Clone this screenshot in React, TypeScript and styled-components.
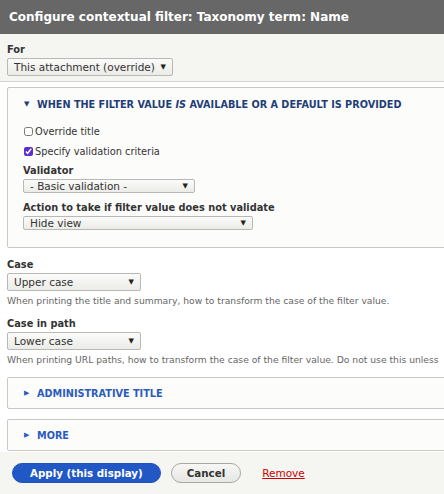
import styled, { createGlobalStyle } from 'styled-components'

const GlobalStyle = createGlobalStyle`
  html, body {
    margin: 0;
    padding: 0;
    background: #fff;
    overflow: hidden;
  }
  * {
    box-sizing: border-box;
  }
`

const Dialog = styled.div`
  width: 444px;
  height: 494px;
  display: flex;
  flex-direction: column;
  font-family: 'DejaVu Sans', 'Liberation Sans', sans-serif;
  color: #333;
  overflow: hidden;
`

const TitleBar = styled.div`
  height: 34px;
  flex: none;
  background: #676767;
  color: #fff;
  font-weight: bold;
  font-size: 12px;
  padding: 10px 9px 0;
  white-space: nowrap;
`

const Content = styled.div`
  flex: 1;
  overflow: hidden;
`

const OverrideBar = styled.div`
  background: #f5f5f2;
  border-bottom: 1px solid #d4d4d0;
  padding: 10px 7px 6px;
  height: 48px;
`

const Label = styled.div`
  font-weight: bold;
  font-size: 9.8px;
  line-height: 12px;
  color: #333;
  white-space: nowrap;
  margin-bottom: 2px;
`

const Select = styled.div<{ $width: number; $height?: number }>`
  width: ${(p) => p.$width}px;
  height: ${(p) => p.$height ?? 18}px;
  display: flex;
  align-items: center;
  justify-content: space-between;
  padding: 0 6px;
  border: 1px solid #b8b8b4;
  border-radius: 2px;
  background: linear-gradient(#fbfbf9, #ebebe8);
  font-size: 10.5px;
  color: #333;
  white-space: nowrap;
`

const Arrow = styled.span`
  font-size: 7px;
  color: #222;
`

const Form = styled.div`
  padding: 5px 0 0 7px;
  width: 620px;
`

const Fieldset = styled.div<{ $open?: boolean }>`
  border: 1px solid #c8c8c4;
  border-radius: 2px;
  background: #fcfcfa;
  padding: ${(p) => (p.$open ? '9px 15px 17px' : '8px 15px 0')};
  height: ${(p) => (p.$open ? 'auto' : '32px')};
  margin-bottom: ${(p) => (p.$open ? '11px' : '10px')};
`

const Legend = styled.div<{ $open?: boolean }>`
  display: flex;
  align-items: center;
  gap: 5px;
  font-weight: bold;
  font-size: 9.7px;
  text-transform: uppercase;
  color: ${(p) => (p.$open ? '#1f3e78' : '#2a5bbf')};
  white-space: nowrap;
  height: 14px;
  em {
    font-style: italic;
  }
`

const Caret = styled.span`
  font-size: 7px;
  width: 8px;
  margin-left: 1px;
`

const FieldsetBody = styled.div`
  padding-top: 10px;
  display: flex;
  flex-direction: column;
`

const CheckRow = styled.label`
  display: flex;
  align-items: center;
  gap: 2px;
  font-size: 9.8px;
  color: #333;
  height: 20px;
`

const Check = styled.input`
  width: 9px;
  height: 9px;
  margin: 0 0 0 1px;
  accent-color: #5b2ed1;
`

const Item = styled.div<{ $gap: number }>`
  margin-top: ${(p) => p.$gap}px;
`

const Field = styled.div`
  margin-bottom: 12px;
`

const Description = styled.div`
  font-size: 9.2px;
  color: #666;
  white-space: nowrap;
  margin-top: 4px;
`

const Footer = styled.div`
  flex: none;
  height: 42px;
  background: #f5f5f2;
  display: flex;
  align-items: center;
  gap: 10px;
  padding: 0 12px;
`

const Button = styled.button<{ $primary?: boolean }>`
  height: 20px;
  border-radius: 10px;
  font-family: inherit;
  font-weight: bold;
  font-size: 10.3px;
  padding: 0 ${(p) => (p.$primary ? '17px' : '15px')};
  border: 1px solid ${(p) => (p.$primary ? '#1e53c0' : '#a8a8a4')};
  background: ${(p) =>
    p.$primary ? '#2158c5' : 'linear-gradient(#f7f7f5, #e6e6e2)'};
  color: ${(p) => (p.$primary ? '#fff' : '#333')};
`

const RemoveLink = styled.a`
  margin-left: 11px;
  font-size: 10.5px;
  color: #c00;
  text-decoration: underline;
`

export default function App() {
  return (
    <Dialog>
      <GlobalStyle />
      <TitleBar>Configure contextual filter: Taxonomy term: Name</TitleBar>

      <Content>
        <OverrideBar>
          <Label>For</Label>
          <Select $width={166}>
            This attachment (override) <Arrow>▼</Arrow>
          </Select>
        </OverrideBar>

        <Form>
          <Fieldset $open>
            <Legend $open>
              <Caret>▼</Caret>
              <span>
                When the filter value <em>is</em> available or a default is provided
              </span>
            </Legend>
            <FieldsetBody>
              <CheckRow>
                <Check type='checkbox' />
                Override title
              </CheckRow>
              <CheckRow>
                <Check type='checkbox' defaultChecked />
                Specify validation criteria
              </CheckRow>
              <Item $gap={4}>
                <Label>Validator</Label>
                <Select $width={172} $height={14}>
                  - Basic validation - <Arrow>▼</Arrow>
                </Select>
              </Item>
              <Item $gap={9}>
                <Label>Action to take if filter value does not validate</Label>
                <Select $width={230} $height={14}>
                  Hide view <Arrow>▼</Arrow>
                </Select>
              </Item>
            </FieldsetBody>
          </Fieldset>

          <Field>
            <Label>Case</Label>
            <Select $width={134}>
              Upper case <Arrow>▼</Arrow>
            </Select>
            <Description>
              When printing the title and summary, how to transform the case of the filter value.
            </Description>
          </Field>

          <Field>
            <Label>Case in path</Label>
            <Select $width={134}>
              Lower case <Arrow>▼</Arrow>
            </Select>
            <Description>
              When printing URL paths, how to transform the case of the filter value. Do not use this unless
            </Description>
          </Field>

          <Fieldset>
            <Legend>
              <Caret>▶</Caret>
              <span>Administrative title</span>
            </Legend>
          </Fieldset>

          <Fieldset>
            <Legend>
              <Caret>▶</Caret>
              <span>More</span>
            </Legend>
          </Fieldset>
        </Form>
      </Content>

      <Footer>
        <Button $primary>Apply (this display)</Button>
        <Button>Cancel</Button>
        <RemoveLink href='#'>Remove</RemoveLink>
      </Footer>
    </Dialog>
  )
}
